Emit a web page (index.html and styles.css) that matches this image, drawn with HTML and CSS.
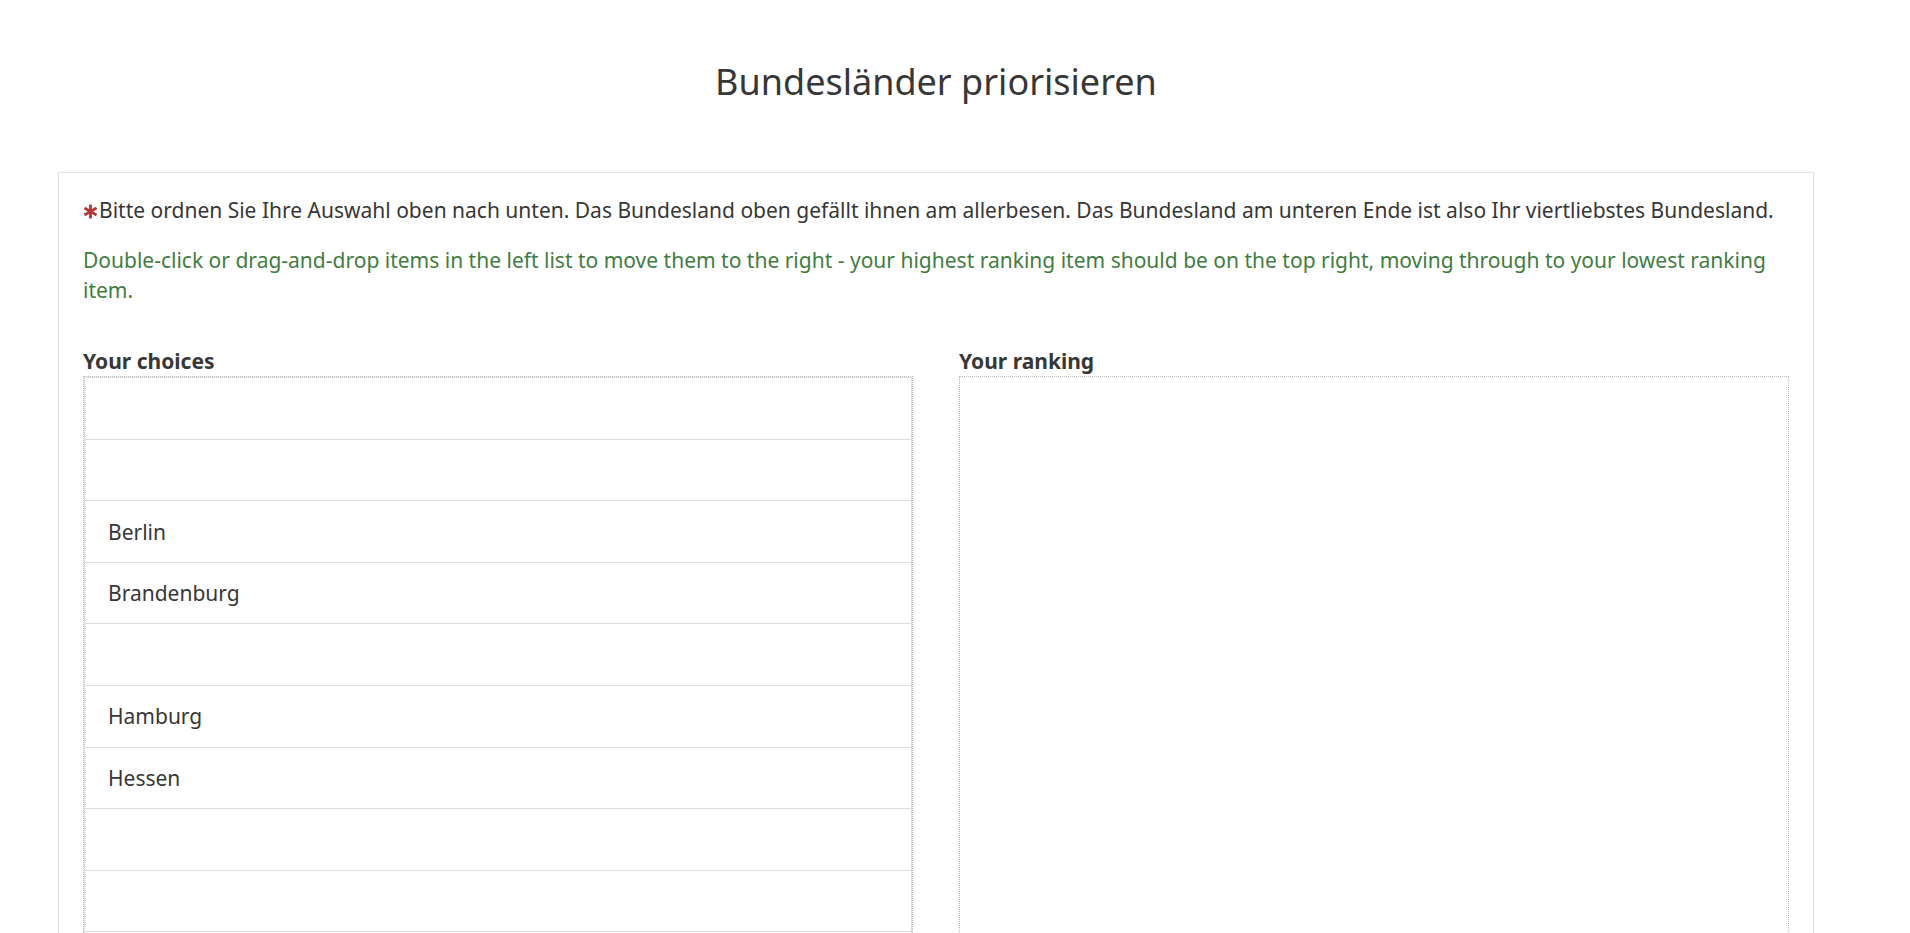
FILE: index.html
```html
<!DOCTYPE html>
<html lang="de">
<head>
<meta charset="utf-8">
<title>Bundesländer priorisieren</title>
<link rel="stylesheet" href="styles.css">
</head>
<body>
<div class="page">
  <h1 class="title">Bundesländer priorisieren</h1>
  <div class="card">
    <p class="question"><svg class="req" viewBox="0 0 16 16" aria-hidden="true"><g fill="#b03a3a"><rect x="6.5" y="0.5" width="3" height="15" rx="0.6"/><rect x="6.5" y="0.5" width="3" height="15" rx="0.6" transform="rotate(60 8 8)"/><rect x="6.5" y="0.5" width="3" height="15" rx="0.6" transform="rotate(-60 8 8)"/></g></svg>Bitte ordnen Sie Ihre Auswahl oben nach unten. Das Bundesland oben gefällt ihnen am allerbesen. Das Bundesland am unteren Ende ist also Ihr viertliebstes Bundesland.</p>
    <p class="help">Double-click or drag-and-drop items in the left list to move them to the right - your highest ranking item should be on the top right, moving through to your lowest ranking item.</p>
    <div class="columns">
      <div class="col">
        <div class="label">Your choices</div>
        <ul class="list">
          <li class="item">&nbsp;</li>
          <li class="item">&nbsp;</li>
          <li class="item">Berlin</li>
          <li class="item">Brandenburg</li>
          <li class="item">&nbsp;</li>
          <li class="item">Hamburg</li>
          <li class="item">Hessen</li>
          <li class="item">&nbsp;</li>
          <li class="item">&nbsp;</li>
          <li class="item">&nbsp;</li>
          <li class="item">&nbsp;</li>
          <li class="item">&nbsp;</li>
        </ul>
      </div>
      <div class="col">
        <div class="label">Your ranking</div>
        <ul class="list list-empty"></ul>
      </div>
    </div>
  </div>
</div>
</body>
</html>
```
FILE: styles.css
```css
* { box-sizing: border-box; }
html, body { margin: 0; padding: 0; background: #fff; }
body {
  font-family: "Noto Sans", "Open Sans", sans-serif;
  font-size: 21px;
  line-height: 30.5px;
  color: #373737;
}
.page {
  padding: 0 96px 40px 58px;
}
.title {
  margin: 0;
  padding-top: 60px;
  height: 172px;
  font-size: 36px;
  line-height: 44px;
  font-weight: 400;
  text-align: center;
  color: #373737;
}
.card {
  border: 1px solid #e3e3e3;
  box-shadow: 0 0 2px rgba(0,0,0,0.06);
  padding: 22px 24px 30px 24px;
}
.question {
  margin: 0 0 19px 0;
  display: flex;
  align-items: center;
}
.req {
  width: 15px;
  height: 15px;
  margin: 2px 1px 0 0;
  flex: none;
}
.help {
  margin: 0;
  color: #427c42;
}
.columns {
  margin-top: 40px;
  display: grid;
  grid-template-columns: 830px 830px;
  column-gap: 46px;
}
.label {
  font-weight: 700;
}
.list {
  list-style: none;
  margin: 0;
  padding: 0;
  border: 1px dotted #bbb;
  min-height: 740px;
}
.item {
  border: 1px solid #ddd;
  margin-bottom: -1px;
  padding: 15.5px 23px 14.6px;
  background: #fff;
}
```
